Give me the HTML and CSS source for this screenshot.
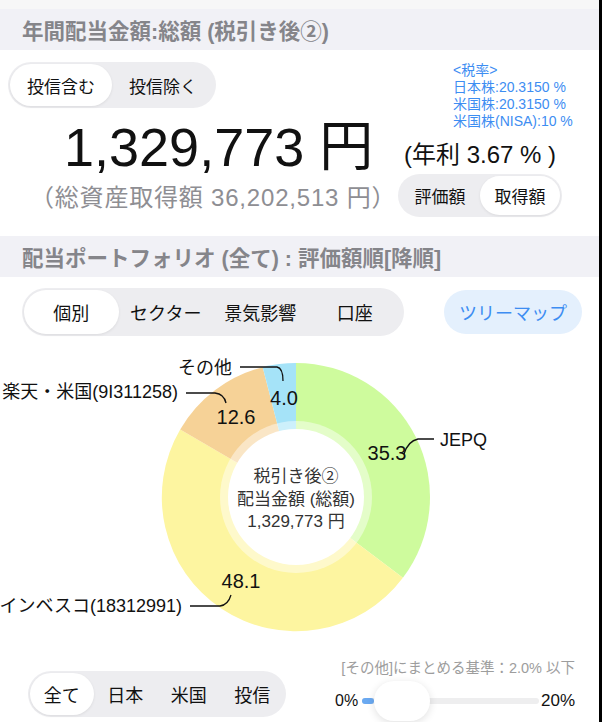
FILE: index.html
```html
<!DOCTYPE html>
<html lang="ja">
<head>
  <meta charset="UTF-8">
  <meta name="viewport" content="width=device-width, initial-scale=1.0">
  <title>配当ポートフォリオ</title>
  <link rel="stylesheet" href="styles.css">
</head>
<body>
  <div class="app">
    <div class="top-gap"></div>

    <div class="section-head">年間配当金額:総額 (税引き後②)</div>

    <div class="summary">
      <div class="summary-left">
        <div class="seg seg-fund">
          <span class="seg-item active">投信含む</span>
          <span class="seg-item">投信除く</span>
        </div>
        <div class="amount">1,329,773 円</div>
        <div class="acquired">（総資産取得額 36,202,513 円）</div>
      </div>
      <div class="summary-right">
        <div class="tax">
          &lt;税率&gt;<br>
          日本株:20.3150 %<br>
          米国株:20.3150 %<br>
          米国株(NISA):10 %
        </div>
        <div class="yield">(年利 3.67 % )</div>
        <div class="seg seg-basis">
          <span class="seg-item">評価額</span>
          <span class="seg-item active">取得額</span>
        </div>
      </div>
    </div>

    <div class="section-head">配当ポートフォリオ (全て) : 評価額順[降順]</div>

    <div class="toolbar">
      <div class="seg seg-group">
        <span class="seg-item active">個別</span>
        <span class="seg-item">セクター</span>
        <span class="seg-item">景気影響</span>
        <span class="seg-item">口座</span>
      </div>
      <button class="treemap-btn">ツリーマップ</button>
    </div>

    <svg class="chart" width="599" height="318" viewBox="0 0 599 318">
      <!-- 35.3 / 48.1 / 12.6 / 4.0 clockwise from top -->
      <path d="M296,156 L296,22 A134,134 0 0 1 402.9,236.8 Z" fill="#cefb9d"/>
      <path d="M296,156 L402.9,236.8 A134,134 0 0 1 180.2,88.5 Z" fill="#fdf5a0"/>
      <path d="M296,156 L180.2,88.5 A134,134 0 0 1 262.7,26.2 Z" fill="#f6d297"/>
      <path d="M296,156 L262.7,26.2 A134,134 0 0 1 296,22 Z" fill="#a5e3f8"/>
      <circle cx="296" cy="156" r="76" fill="#fff" fill-opacity="0.45"/>
      <circle cx="296" cy="156" r="68" fill="#fff"/>

      <text class="center-label" x="296" y="141">税引き後②</text>
      <text class="center-label" x="296" y="164">配当金額 (総額)</text>
      <text class="center-label" x="296" y="186">1,329,773 円</text>

      <text class="value" x="387" y="119">35.3</text>
      <text class="value" x="241" y="247">48.1</text>
      <text class="value" x="236" y="83">12.6</text>
      <text class="value" x="284" y="64">4.0</text>

      <path class="leader" d="M404,113 Q408,100 418,98 L434,98"/>
      <path class="leader" d="M190,265 L220,265 Q228,264 231,254"/>
      <path class="leader" d="M186,52 L215,52 Q224,53 226,62"/>
      <path class="leader" d="M240,26 L277,26 Q283,27 283,40"/>

      <text class="name" x="440" y="105">JEPQ</text>
      <text class="name end" x="182" y="271">インベスコ(18312991)</text>
      <text class="name end" x="178" y="57">楽天・米国(9I311258)</text>
      <text class="name end" x="232" y="33">その他</text>
    </svg>

    <div class="footer">
      <div class="seg seg-region">
        <span class="seg-item active">全て</span>
        <span class="seg-item">日本</span>
        <span class="seg-item">米国</span>
        <span class="seg-item">投信</span>
      </div>
      <div class="threshold">
        <div class="threshold-note">[その他]にまとめる基準：2.0% 以下</div>
        <div class="slider">
          <span class="slider-min">0%</span>
          <div class="track">
            <div class="track-fill"></div>
            <div class="thumb"></div>
          </div>
          <span class="slider-max">20%</span>
        </div>
      </div>
    </div>
  </div>
</body>
</html>
```

FILE: styles.css
```css
body {
  margin: 0;
  background-color: #000;
  font-family: "Liberation Sans", "Noto Sans CJK JP", sans-serif;
  color: #111;
}

.app {
  width: 599px;
  height: 722px;
  overflow: hidden;
  background-color: #fff;
}

.top-gap {
  height: 9px;
  background-color: #f7f7f7;
}

.section-head {
  height: 41px;
  display: flex;
  align-items: center;
  padding-left: 22px;
  background-color: #f1f1f6;
  color: #85858a;
  font-size: 21.5px;
  font-weight: bold;
}

/* segmented controls */
.seg {
  display: grid;
  grid-auto-flow: column;
  grid-auto-columns: 1fr;
  padding: 2px;
  background-color: #ededf0;
  border-radius: 24px;
  box-sizing: border-box;
}

.seg-item {
  display: flex;
  align-items: center;
  justify-content: center;
  border-radius: 22px;
  color: #111;
}

.seg-item.active {
  background-color: #fff;
  box-shadow: 0 1px 3px rgba(0, 0, 0, 0.08);
}

.seg-fund {
  width: 208px;
  height: 46px;
  font-size: 17px;
  margin-left: 8px;
}

.seg-basis {
  width: 164px;
  height: 43px;
  font-size: 17px;
}

.seg-group {
  width: 382px;
  height: 48px;
  font-size: 18px;
}

.seg-region {
  width: 258px;
  height: 46px;
  font-size: 18px;
}

/* summary */
.summary {
  height: 186px;
  display: flex;
  justify-content: space-between;
}

.summary-left {
  padding-top: 12px;
}

.amount {
  margin: 12px 0 0 64px;
  font-size: 54px;
  line-height: 54px;
  white-space: nowrap;
}

.acquired {
  margin: 10px 0 0 30px;
  font-size: 24px;
  line-height: 28px;
  letter-spacing: 0.8px;
  color: #8e8e93;
  white-space: nowrap;
}

.summary-right {
  width: 201px;
  padding-top: 12px;
}

.tax {
  margin-left: 55px;
  font-size: 14px;
  line-height: 17px;
  color: #3d8df2;
  white-space: nowrap;
}

.yield {
  margin: 11px 0 0 6px;
  font-size: 24px;
  line-height: 28px;
  white-space: nowrap;
}

.seg-basis {
  margin-top: 5px;
}

/* toolbar */
.toolbar {
  display: flex;
  align-items: center;
  padding: 11px 17px 0 22px;
}

.treemap-btn {
  margin-left: auto;
  height: 44px;
  padding: 0 15px;
  border: none;
  border-radius: 22px;
  background-color: #e4f0fd;
  color: #3d8df2;
  font-family: inherit;
  font-size: 18px;
}

/* chart */
.chart {
  display: block;
  margin-top: 5px;
  font-family: "Liberation Sans", "Noto Sans CJK JP", sans-serif;
}

.center-label {
  font-size: 17px;
  fill: #333;
  text-anchor: middle;
}

.value {
  font-size: 20px;
  fill: #111;
  text-anchor: middle;
}

.name {
  font-size: 18px;
  fill: #111;
}

.name.end {
  text-anchor: end;
}

.leader {
  fill: none;
  stroke: #111;
  stroke-width: 1.3;
}

/* footer */
.footer {
  display: flex;
}

.seg-region {
  margin: 12px 0 0 28px;
}

.threshold {
  margin-left: auto;
  margin-right: 24px;
  width: 240px;
}

.threshold-note {
  text-align: right;
  font-size: 14.5px;
  line-height: 18px;
  color: #9d9d9d;
}

.slider {
  display: flex;
  align-items: center;
  margin-top: 14px;
}

.slider-min {
  font-size: 16px;
}

.slider-max {
  font-size: 17px;
}

.track {
  position: relative;
  flex: 1;
  height: 6px;
  margin: 0 2px 0 4px;
  border-radius: 3px;
  background-color: #eeeeef;
}

.track-fill {
  width: 12px;
  height: 6px;
  border-radius: 3px;
  background-color: #6aa9f1;
}

.thumb {
  position: absolute;
  left: 12px;
  top: -17px;
  width: 56px;
  height: 40px;
  border-radius: 20px;
  background-color: #fff;
  box-shadow: 0 2px 8px rgba(0, 0, 0, 0.12);
}
```
